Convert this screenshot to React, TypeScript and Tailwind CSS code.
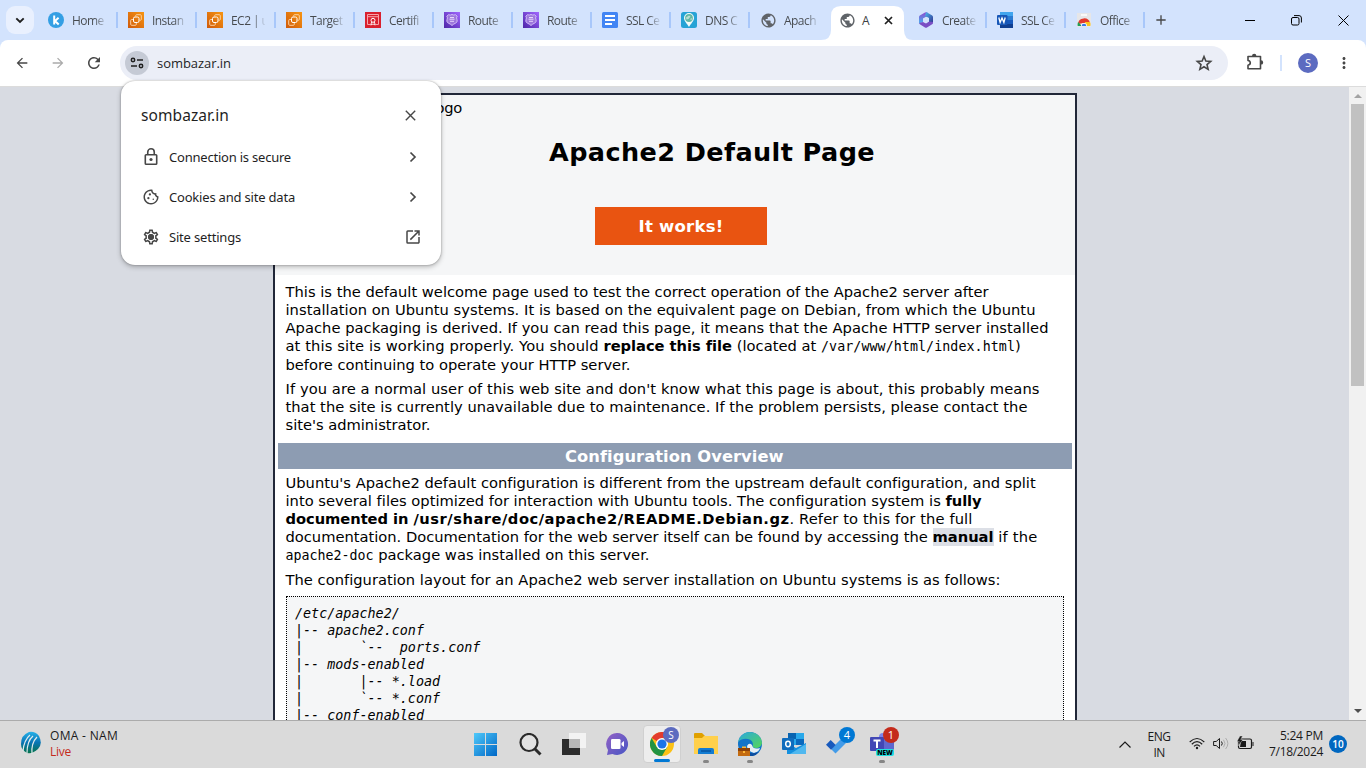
import { useLayoutEffect, useRef, useState, type ReactNode } from "react";
import {
  MdArrowBack, MdArrowForward, MdRefresh, MdMoreVert,
  MdOutlineCookie, MdOpenInNew, MdPublic, MdAdd, MdOutlineSettings,
} from "react-icons/md";

/** One line of text whose letter spacing is adjusted to span a given width. */
function Line({ w, className = "", children }: { w: number; className?: string; children: ReactNode }) {
  const ref = useRef<HTMLSpanElement>(null);
  const [spacing, setSpacing] = useState(0);
  useLayoutEffect(() => {
    const el = ref.current;
    if (!el) return;
    const n = (el.textContent ?? "").length;
    setSpacing((w - el.getBoundingClientRect().width) / n);
  }, [w]);
  return (
    <div className={`whitespace-pre ${className}`}>
      <span ref={ref} style={{ letterSpacing: spacing }}>{children}</span>
    </div>
  );
}

const Ec2 = () => (
  <svg width="16" height="16" viewBox="0 0 16 16">
    <defs><linearGradient id="ec" x1="0" y1="1" x2="1" y2="0"><stop stopColor="#cf5a0b" /><stop offset="1" stopColor="#f79512" /></linearGradient></defs>
    <rect width="16" height="16" fill="url(#ec)" />
    <rect x="5.5" y="5" width="5.500" height="5.500" rx="1.500" fill="none" stroke="#fff" />
    <path d="M5 7.500H3.700q-1 0-1 1v3.800q0 1 1 1h3.600q1 0 1-1V11M7.700 4.500v-.8q0-1 1-1h3.600q1 0 1 1v3.600q0 1-1 1h-.8" fill="none" stroke="#ffd9ae" strokeWidth=".9" />
  </svg>
);
const Cert = () => (
  <svg width="16" height="16" viewBox="0 0 16 16">
    <rect width="16" height="16" fill="#d9202f" />
    <path d="M5 12.500H2.500v-10h11v10H11M2.500 4.700h11" fill="none" stroke="#f7a3a9" />
    <circle cx="8" cy="8.300" r="2" fill="none" stroke="#fff" /><path d="M6.700 10l-1 3 2.300-1 2.300 1-1-3" fill="none" stroke="#fff" strokeWidth=".9" />
  </svg>
);
const Route = () => (
  <svg width="16" height="16" viewBox="0 0 16 16">
    <defs><linearGradient id="rt" x1="0" y1="1" x2="1" y2="0"><stop stopColor="#4d27a8" /><stop offset="1" stopColor="#a166ff" /></linearGradient></defs>
    <rect width="16" height="16" fill="url(#rt)" />
    <path d="M4.500 2.700q1.700.8 3.500-.2 1.800 1 3.500.2l1.700 1.500q-1.200 1.700-.2 3.300 1 2.500-1.500 3.700-2 .8-3.500 2.300-1.500-1.500-3.500-2.300-2.500-1.200-1.500-3.700 1-1.600-.2-3.300z" fill="#9d77dc" stroke="#d9c5fa" strokeWidth=".9" />
    <path d="M6 5.500h4M5.500 7.200h5M6 9.300h4" stroke="#eee2ff" strokeWidth=".9" />
  </svg>
);
const Docs = () => (
  <svg width="16" height="16" viewBox="0 0 16 16"><rect width="16" height="16" rx="1.500" fill="#4285f4" /><path d="M3 4h10M3 8h10M3 12h7" stroke="#fff" strokeWidth="2" /></svg>
);
const Dns = () => (
  <svg width="16" height="16" viewBox="0 0 16 16"><rect width="16" height="16" rx="2.500" fill="#26a3d6" /><path d="M8 15C6 11.500 3 9 3 6a5 5 0 0 1 10 0c0 3-3 5.500-5 9z" fill="#f4fbf8" /><circle cx="8" cy="6" r="3.900" fill="#62b7a5" /><path d="M5 5.500l3-2 1.500 1-2 2.500-2 .5zM9 7l2-1-.5 2.500z" fill="#b8dfd2" /></svg>
);
const K = () => (
  <svg className="-ml-px mr-px" width="16" height="16" viewBox="0 0 16 16"><circle cx="8" cy="8" r="8" fill="#349fe4" /><path d="M6.200 3.500v9M10.600 5.700L7 9l3.700 3.500" stroke="#fff" strokeWidth="2" fill="none" /></svg>
);
const Globe = () => <MdPublic className="-mr-px size-[17px] shrink-0 text-[#5f6368]" />;
const M365 = () => (
  <svg width="16" height="16" viewBox="0 0 16 16">
    <defs>
      <linearGradient id="m1" x1="0" y1="0" x2="0" y2="1"><stop stopColor="#8e4bd0" /><stop offset="1" stopColor="#46b5ef" /></linearGradient>
      <linearGradient id="m2" x1="0" y1="0" x2="1" y2="1"><stop stopColor="#4db8f0" /><stop offset="1" stopColor="#31348f" /></linearGradient>
    </defs>
    <path d="M7 .6L1.800 3.600Q1 4.200 1 5v6.500L5 10V6.500L10 4V1L9 .5Q8 .1 7 .6z" fill="url(#m1)" />
    <path d="M8 .3q1-.1 2 .7l4.200 2.500Q15 4 15 5v6l-4-1V6L7 4z" fill="url(#m2)" />
    <path d="M15 10v1q0 .8-.8 1.300L9 15.400q-1 .5-2 0L1.800 12.300 1 11l4-1 3 1.500L11 9.500z" fill="#7a4fc4" />
    <path d="M8 5l2.700 1.500v3L8 11 5.300 9.500v-3z" fill="#d3e3fd" />
  </svg>
);
const Word = () => (
  <svg width="16" height="16" viewBox="0 0 16 16"><path d="M3 0h13v4H3z" fill="#41a5ee" /><path d="M3 4h13v4H3z" fill="#2b7cd3" /><path d="M3 8h13v4H3z" fill="#185abd" /><path d="M3 12h13v4H3z" fill="#103f91" /><rect y="3" width="10.500" height="10" rx="1" fill="#1757b7" /><path d="M1.800 5.500l1.300 5L5 6l1.900 4.500 1.300-5" stroke="#fff" strokeWidth="1.300" fill="none" /></svg>
);
const Store = () => (
  <svg width="16" height="16" viewBox="0 0 16 16"><path d="M1 1h14v14H1z" fill="#e6e6e8" /><path d="M5 3h6" stroke="#fff" strokeWidth="1.500" /><path d="M2 12a6.100 6.100 0 0 1 12-1H8z" fill="#e33b2e" /><path d="M2 10l4 4H1.700q-.4-2 .3-4z" fill="#219e56" /><path d="M9 10h5q1 2 .3 4H8z" fill="#fcc31e" /><path d="M5 14a3 3 0 0 1 6 0z" fill="#fff" /><path d="M5.700 14a2.300 2.300 0 0 1 4.600 0z" fill="#3b78e7" /></svg>
);

const tabs: { icon: () => ReactNode; text: string; active?: boolean; bar?: boolean }[] = [
  { icon: K, text: "Home", bar: true },
  { icon: Ec2, text: "Instan", bar: true },
  { icon: Ec2, text: "EC2 | u", bar: true },
  { icon: Ec2, text: "Target", bar: true },
  { icon: Cert, text: "Certifi", bar: true },
  { icon: Route, text: "Route", bar: true },
  { icon: Route, text: "Route", bar: true },
  { icon: Docs, text: "SSL Ce", bar: true },
  { icon: Dns, text: "DNS C", bar: true },
  { icon: Globe, text: "Apach" },
  { icon: Globe, text: "A", active: true },
  { icon: M365, text: "Create", bar: true },
  { icon: Word, text: "SSL Ce", bar: true },
  { icon: Store, text: "Office", bar: true },
];

function TabStrip() {
  return (
    <div className="flex h-10 items-center bg-[#d3e3fd]">
      <div className="ml-1.5 flex size-7 items-center justify-center rounded-[9px] bg-[#e9f0fe] text-[#1f1f1f]">
        <svg width="10" height="7" viewBox="0 0 10 7"><path d="M1.300 1.300L5 5l3.700-3.700" stroke="currentColor" strokeWidth="1.900" fill="none" /></svg>
      </div>
      <div className="ml-[5px] flex h-10 items-center">
        {tabs.map((t, i) =>
          t.active ? (
            <div key={i} className="relative mt-1.5 flex h-[34px] w-[79px] items-center">
              <svg className="absolute -left-2 top-0" width="92" height="34" viewBox="0 0 92 34"><path d="M0 34q10 0 10-10V10Q10 0 20 0h53q10 0 10 10v14q0 10 9 10z" fill="#fff" /></svg>
              <div className="relative -mt-1.5 flex items-center pl-[10px]">
                <Globe />
                <span className="ml-[7px] mt-px w-[9px] font-['Open_Sans',sans-serif] text-[12px] text-[#3c4043]">{t.text}</span>
                <svg className="ml-[13px]" width="9" height="9" viewBox="0 0 9 9"><path d="M1 1l7 7M8 1L1 8" stroke="#1f1f1f" strokeWidth="1.700" /></svg>
              </div>
            </div>
          ) : (
            <div key={i} className="flex h-10 w-[79px] items-center pl-[10px]">
              {t.icon()}
              <span className={`mt-0.5 w-[34px] whitespace-pre bg-linear-to-r from-[#45494d] from-65% to-[#45494d]/10 bg-clip-text font-['Open_Sans',sans-serif] text-[12px] leading-4 tracking-[-0.55px] text-transparent ${i === 0 ? "ml-[7px] mr-px" : "ml-2"}`}>{t.text}</span>
              {t.bar && <span className="ml-auto h-4 w-0.5 bg-[#a8c7fa]" />}
            </div>
          )
        )}
      </div>
      <MdAdd className="ml-2 size-4 text-[#474747]" />
      <div className="ml-auto flex items-center gap-[36px] pr-[17px]">
        <svg width="10" height="10" viewBox="0 0 10 10"><path d="M0 5.500h10" stroke="#000" /></svg>
        <svg width="11" height="11" viewBox="0 0 11 11"><rect x=".5" y="2.500" width="7.500" height="7.500" rx="1.500" fill="none" stroke="#000" /><path d="M3 .6h5q2.400 0 2.400 2.400v4.500" stroke="#000" fill="none" /></svg>
        <svg width="11" height="11" viewBox="0 0 11 11"><path d="M.5.5l10 10M10.500.5l-10 10" stroke="#000" /></svg>
      </div>
    </div>
  );
}

function Toolbar() {
  return (
    <div className="bg-[#d3e3fd]">
      <div className="flex h-[47px] items-start rounded-t-lg border-b border-[#dcdcdc] bg-white text-[#474747]">
        <MdArrowBack className="ml-[14px] mt-[15px] size-4" />
        <MdArrowForward className="ml-5 mt-[15px] size-4 text-[#ababab]" />
        <MdRefresh className="ml-[19px] mt-[14px] size-[18px]" />
        <div className="ml-[17px] mt-1.5 flex h-[34px] w-[1108px] items-center rounded-full bg-[#ebeef7] pl-[5px] pr-[15px]">
          <div className="flex size-6 items-center justify-center rounded-full bg-[#c5cad5]">
            <svg width="14" height="12" viewBox="0 0 14 12" fill="none" stroke="#1f1f1f" strokeWidth="1.500"><circle cx="3" cy="3" r="1.700" /><path d="M7 3h6M1 9h6" /><circle cx="11" cy="9" r="1.700" /></svg>
          </div>
          <Line w={74} className="ml-2 mt-0.5 font-['Open_Sans',sans-serif] text-[13px] text-[#1f1f1f]">sombazar.in</Line>
          <svg className="ml-auto" width="18" height="18" viewBox="0 0 18 18"><path d="M9 2.500l1.850 4.550 4.850.4-3.700 3.150 1.150 4.800L9 12.800l-4.150 2.600L6 10.600 2.300 7.450l4.850-.4z" fill="none" stroke="#474747" strokeWidth="1.600" /></svg>
        </div>
        <svg className="ml-[18px] mt-[13px]" width="18" height="18" viewBox="0 0 18 18"><path d="M2 3.500h12.500v12.200H2v-3.500q2.300-.4 2.300-2.400T2 7.500z" fill="none" stroke="#474747" strokeWidth="1.600" strokeLinejoin="round" /><path d="M6 3a2.200 2.200 0 0 1 4.400 0zM15 7.200a2.200 2.200 0 0 1 0 4.400z" fill="#474747" /></svg>
        <span className="ml-4 mt-[15px] h-4 w-0.5 bg-[#d3e3fd]" />
        <span className="ml-4 mt-[13px] flex size-5 items-center justify-center rounded-full bg-[#5c6bc0] font-['Open_Sans',sans-serif] text-[11px] text-white">S</span>
        <MdMoreVert className="ml-[17px] mt-[14px] size-[18px]" />
      </div>
    </div>
  );
}

const Lock = () => (
  <svg width="18" height="20" viewBox="0 0 18 20" fill="none" stroke="#474747" strokeWidth="1.600"><rect x="3.300" y="7.800" width="11.400" height="9.400" rx=".8" /><path d="M5.750 7.500V5a3.250 3.250 0 0 1 6.500 0v2.500" /><circle cx="9" cy="12.500" r="1.600" fill="#474747" stroke="none" /></svg>
);
const Chevron = () => (
  <svg className="ml-auto mr-[24px]" width="8" height="12" viewBox="0 0 8 12"><path d="M1.500 1.500L6 6l-4.500 4.500" fill="none" stroke="#474747" strokeWidth="1.700" /></svg>
);

function SitePopup() {
  const row = "flex h-10 items-center pl-[21px] text-[#474747]";
  const label = "ml-[9px] mt-px font-['Noto_Sans',sans-serif] text-[13px] text-[#1f1f1f]";
  return (
    <div className="absolute left-[121px] top-[81px] h-[184px] w-[320px] rounded-[14px] bg-white pt-[13px] shadow-[0_0_2px_rgba(0,0,0,0.35),0_2px_5px_rgba(0,0,0,0.25)]">
      <div className="flex h-[43px] items-center pl-5 pr-[25px] text-[#474747]">
        <Line w={88} className="font-['Noto_Sans',sans-serif] text-[15.5px] text-[#1f1f1f]">sombazar.in</Line>
        <svg className="-mt-px ml-auto" width="11" height="11" viewBox="0 0 11 11"><path d="M.8.8l9.400 9.400M10.200.8L.8 10.200" stroke="#474747" strokeWidth="1.400" /></svg>
      </div>
      <div className={row}><Lock /><Line w={122} className={label}>Connection is secure</Line><Chevron /></div>
      <div className={row}><MdOutlineCookie className="size-[18px]" /><Line w={126} className={label}>Cookies and site data</Line><Chevron /></div>
      <div className={row}>
        <span className="relative flex size-[18px]"><MdOutlineSettings className="size-[18px]" /><span className="absolute left-1.5 top-1.5 size-1.5 rounded-full bg-[#474747]" /></span>
        <Line w={72} className={label}>Site settings</Line><MdOpenInNew className="ml-auto mr-[19px] size-[18px]" />
      </div>
    </div>
  );
}

const mono = "font-['DejaVu_Sans_Mono',monospace] text-[13.3px]";

function ApachePage() {
  return (
    <div className="flex h-[633px] overflow-hidden bg-[#d8dbe2] font-['DejaVu_Sans',sans-serif] text-[14.7px] text-black">
      <div className="ml-[273px] mt-1.5 h-[700px] w-[804px] shrink-0 border-2 border-[#212738] bg-white">
        <div className="flex h-[180px] flex-col bg-[#f5f6f7]">
          <Line w={148} className="pl-[39px] leading-[26px]">Ubuntu Apache Logo</Line>
          <Line w={326} className="pl-[274px] pt-3 text-[25.5px] font-bold leading-[38px]">Apache2 Default Page</Line>
          <div className="ml-[320px] mt-9 flex h-[38px] w-[172px] items-center justify-center bg-[#e95411] pt-[3px] text-[16.5px] font-bold text-white">
            <Line w={85}>It works!</Line>
          </div>
        </div>
        <div className="pl-[10.5px] pt-2 leading-[18px]">
          <Line w={703}>This is the default welcome page used to test the correct operation of the Apache2 server after</Line>
          <Line w={750}>installation on Ubuntu systems. It is based on the equivalent page on Debian, from which the Ubuntu</Line>
          <Line w={763}>Apache packaging is derived. If you can read this page, it means that the Apache HTTP server installed</Line>
          <div className="flex h-[18px] items-baseline">
            <Line w={318}>at this site is working properly. You should </Line>
            <Line w={128} className="font-bold">replace this file</Line>
            <Line w={89}> (located at </Line>
            <Line w={194} className={mono}>/var/www/html/index.html</Line>
            <Line w={6}>)</Line>
          </div>
          <Line w={345} className="mt-px">before continuing to operate your HTTP server.</Line>
          <Line w={754} className="mt-1.5">If you are a normal user of this web site and don't know what this page is about, this probably means</Line>
          <Line w={742}>that the site is currently unavailable due to maintenance. If the problem persists, please contact the</Line>
          <Line w={145}>site's administrator.</Line>
        </div>
        <div className="mx-[3px] mt-[9px] flex h-[26px] items-center bg-[#8d9cb2] pl-[287px] pt-[3px] text-[16.3px] font-bold text-white">
          <Line w={218}>Configuration Overview</Line>
        </div>
        <div className="pl-[10.5px] pt-[5px] leading-[18px]">
          <Line w={750}>Ubuntu's Apache2 default configuration is different from the upstream default configuration, and split</Line>
          <div className="flex h-[18px] items-baseline">
            <Line w={660}>into several files optimized for interaction with Ubuntu tools. The configuration system is </Line>
            <Line w={36} className="font-bold">fully</Line>
          </div>
          <div className="flex h-[18px] items-baseline">
            <Line w={128} className="font-bold">documented in </Line>
            <Line w={376} className="font-bold">/usr/share/doc/apache2/README.Debian.gz</Line>
            <Line w={183}>. Refer to this for the full</Line>
          </div>
          <div className="flex h-[18px] items-baseline">
            <Line w={647}>documentation. Documentation for the web server itself can be found by accessing the </Line>
            <Line w={61} className="bg-[#dcdfe6] font-bold">manual</Line>
            <Line w={44}> if the</Line>
          </div>
          <div className="flex h-[18px] items-baseline">
            <Line w={88} className={mono}>apache2-doc</Line>
            <Line w={276}> package was installed on this server.</Line>
          </div>
          <Line w={715} className="mt-[7px]">The configuration layout for an Apache2 web server installation on Ubuntu systems is as follows:</Line>
        </div>
        <pre className="ml-[11px] mt-[7px] h-[200px] w-[778px] border border-dotted border-black bg-[#f5f6f7] pl-2 pt-2 font-['DejaVu_Sans_Mono',monospace] text-[13.4px] italic leading-[17px]">{`/etc/apache2/
|-- apache2.conf
|       \`--  ports.conf
|-- mods-enabled
|       |-- *.load
|       \`-- *.conf
|-- conf-enabled`}</pre>
      </div>
      <div className="ml-auto flex h-full w-[17px] flex-col items-center bg-[#f1f1f1]">
        <svg className="mt-[7px]" width="8" height="4" viewBox="0 0 8 4"><path d="M0 4l4-4 4 4z" fill="#a3a3a3" /></svg>
        <div className="mt-1.5 h-[282px] w-[13px] bg-[#c1c1c1]" />
        <svg className="mb-[7px] mt-auto" width="8" height="4" viewBox="0 0 8 4"><path d="M0 0l4 4 4-4z" fill="#505050" /></svg>
      </div>
    </div>
  );
}

function Slot({ children, dot, active }: { children: ReactNode; dot?: boolean; active?: boolean }) {
  return (
    <div className="flex h-12 w-11 justify-center">
      <div className={`relative mt-1 flex h-[38px] w-[38px] flex-col items-center ${active ? "rounded border border-[#d0d0d0] bg-[#ededed] pt-[6px]" : "pt-2"}`}>
        {children}
        {dot && <span className="mt-auto h-[3px] w-1.5 shrink-0 rounded-full bg-[#868686]" />}
        {active && <span className="mt-auto h-[3px] w-4 shrink-0 rounded-full bg-[#0078d4]" />}
      </div>
    </div>
  );
}

function Taskbar() {
  const ui = "font-['Open_Sans',sans-serif]";
  return (
    <div className="flex h-12 border-t border-[#ababab] bg-[#dadada] text-[#1b1b1b]">
      <div className="flex w-[464px] pl-5">
        <svg className="mt-[10px]" width="22" height="24" viewBox="0 0 22 24">
          <defs><linearGradient id="ic" x1="0" y1="0" x2="0" y2="1"><stop stopColor="#27b1e8" /><stop offset=".5" stopColor="#0874b5" /><stop offset="1" stopColor="#07734c" /></linearGradient></defs>
          <path d="M1 13Q1 4 9 1q6-1 10 4 4 8-1 13-5 5-11 4Q1 19 1 13z" fill="url(#ic)" />
          <path d="M3 20Q4 9 10 4M7 22q0-12 6-17M12 23q-1-11 5-17" fill="none" stroke="#e1ebed" strokeWidth="1.200" />
        </svg>
        <div className={`ml-2 mt-[7px] text-[12px] leading-4 ${ui}`}>
          <Line w={68}>OMA - NAM</Line>
          <Line w={21} className="text-[#c42b1c]">Live</Line>
        </div>
      </div>
      <div className="flex">
        <Slot>
          <svg className="-ml-px" width="23" height="23" viewBox="0 0 23 23"><defs><linearGradient id="wn" x1="0" y1="0" x2="1" y2="1"><stop stopColor="#4fc9fa" /><stop offset="1" stopColor="#0067c6" /></linearGradient></defs><path d="M0 0h11v11H0zM12 0h11v11H12zM0 12h11v11H0zM12 12h11v11H12z" fill="url(#wn)" /></svg>
        </Slot>
        <Slot><svg width="23" height="23" viewBox="0 0 23 23" fill="none" stroke="#2a2a2a"><circle cx="10" cy="9.500" r="8.500" strokeWidth="2.200" fill="#e2e2e2" /><path d="M16 16l5.500 5.500" strokeWidth="3" /></svg></Slot>
        <Slot><svg width="24" height="23" viewBox="0 0 24 23"><path d="M0 6h18v16H0z" fill="#2c2c2c" /><path d="M7 0h17v15H7z" fill="#f3f3f3" /><path d="M7 6h11v9H7z" fill="#b8b8b8" /></svg></Slot>
        <Slot>
          <svg className="-ml-px" width="23" height="23" viewBox="0 0 23 23"><defs><linearGradient id="ch" x1="0" y1="0" x2="1" y2="1"><stop stopColor="#9361c5" /><stop offset="1" stopColor="#4756c4" /></linearGradient></defs><path d="M11.500 0a11 11 0 1 1-5 21L1 22l1-5A11 11 0 0 1 11.500 0z" fill="url(#ch)" /><rect x="5" y="6" width="9.500" height="10" rx="1.300" fill="#fff" /><path d="M15.500 10l2.500-2v6l-2.500-2z" fill="#fff" /></svg>
        </Slot>
        <Slot active>
          <svg width="24" height="24" viewBox="0 0 24 24"><circle cx="12" cy="12" r="12" fill="#fbc116" /><path d="M12 12L1.600 6A12 12 0 0 1 22.400 6H12z" fill="#e33b2e" /><path d="M1.600 6A12 12 0 0 0 12 24l5.200-9L12 12l-5.200 3z" fill="#229342" /><circle cx="12" cy="12" r="6" fill="#fff" /><circle cx="12" cy="12" r="4.600" fill="#1a73e8" /></svg>
          <span className={`absolute left-[19px] top-px flex size-4 items-center justify-center rounded-full bg-[#5c6bc0] text-[10px] text-white ${ui}`}>S</span>
        </Slot>
        <Slot dot>
          <svg width="24" height="22" viewBox="0 0 24 22"><path d="M0 1q0-1 1-1h7l3 3v4H0z" fill="#e0a000" /><path d="M0 5h8l2-2h14v18H0z" fill="#ffd04c" /><path d="M4 21v-4q0-2 2-2h12q2 0 2 2v4z" fill="#137cd2" /><path d="M7 18h10" stroke="#0755a0" strokeWidth="1.500" /></svg>
        </Slot>
        <Slot dot>
          <svg className="-mt-px" width="24" height="24" viewBox="0 0 24 24"><defs><linearGradient id="eg" x1="0" y1="0" x2="1" y2="1"><stop stopColor="#2aa9e0" /><stop offset="1" stopColor="#55d657" /></linearGradient></defs><circle cx="12" cy="12" r="12" fill="#1274c9" /><path d="M0 10C2 3 7 0 12 0q11 1 12 11-1 5-6 5-4 0-3-3 0-5-5-6Q4 6 0 10z" fill="url(#eg)" /><path d="M14 13q-3-3-5 1 0 5 7 7 5-1 6-5-7 2-8-3z" fill="#e6eef4" /><path d="M9 18q2 5 12 2-4 5-10 4z" fill="#0b4da0" /><path d="M0 16h12v8H0z" fill="#c46b10" /><path d="M0 16h12v3H0z" fill="#8b4209" /><path d="M4 16v-1.500h4V16M5 19h2v2H5z" fill="#ffb937" /></svg>
        </Slot>
        <Slot>
          <svg width="24" height="22" viewBox="0 0 24 22"><path d="M6 0h16v12H6z" fill="#28a8ea" /><path d="M6 0h8v6H6z" fill="#0864b1" /><path d="M14 6h8v6h-8z" fill="#0b69bd" /><path d="M5 10l9 5 10-5v11H5z" fill="#1490df" /><path d="M24 11v10H8z" fill="#50b8ef" /><rect y="5" width="12" height="12" rx="1" fill="#0f6cbd" /><ellipse cx="6" cy="11" rx="2.300" ry="2.700" fill="none" stroke="#fff" strokeWidth="1.500" /></svg>
        </Slot>
        <Slot>
          <svg className="-ml-1" width="20" height="22" viewBox="0 0 20 22"><path d="M9.500 20.500L5 16 15.500 5.500 20 10z" fill="#439be8" /><path d="M4.700 7L0 11.700 5 16.700l4.700-4.700z" fill="#185abd" /></svg>
          <span className={`absolute left-[20px] top-0.5 flex size-4 items-center justify-center rounded-full bg-[#0078d4] text-[11px] text-white ${ui}`}>4</span>
        </Slot>
        <Slot dot>
          <svg width="24" height="23" viewBox="0 0 24 23"><circle cx="13" cy="4" r="4" fill="#7b83eb" /><path d="M8 6h16v10q-4 6-10 5-6-2-6-7z" fill="#6068cf" /><rect y="4" width="14" height="14" rx="1" fill="#4247b5" /><path d="M3.500 7.500h7M7 7.500V15" stroke="#fff" strokeWidth="2" /></svg>
          <span className="absolute left-[13px] top-6 flex h-[7px] w-[18px] items-center justify-center rounded-[2px] bg-[#20dfe0] font-['Open_Sans',sans-serif] text-[6.5px] font-extrabold text-black">NEW</span>
          <span className={`absolute left-[20px] top-0.5 flex size-4 items-center justify-center rounded-full bg-[#c42b1c] text-[11px] text-white ${ui}`}>1</span>
        </Slot>
      </div>
      <div className={`ml-auto flex text-[12px] leading-4 ${ui}`}>
        <svg className="mt-5" width="12" height="7" viewBox="0 0 12 7"><path d="M.5 6.500L6 1l5.500 5.500" fill="none" stroke="#1b1b1b" strokeWidth="1.200" /></svg>
        <div className="ml-4 mt-2 flex w-6 flex-col items-center"><Line w={23}>ENG</Line><Line w={11}>IN</Line></div>
        <svg className="ml-[18px] mt-4" width="16" height="13" viewBox="0 0 16 13" fill="none" stroke="#1b1b1b"><path d="M.7 5q7.300-7 14.600 0" strokeWidth="1.100" /><path d="M2.800 7.200q5.200-5 10.400 0M5 9.400q3-3 6 0" strokeWidth="1.200" /><circle cx="8" cy="11" r="1.200" fill="#1b1b1b" stroke="none" /></svg>
        <svg className="ml-2 mt-4" width="16" height="13" viewBox="0 0 16 13" fill="none" stroke="#1b1b1b"><path d="M.6 4.500h2.600L6.500 1.500v10L3.200 8.500H.6z" /><path d="M8.500 4.500q1.500 2 0 4" /><path d="M10.500 2.800q3 3.700 0 7.400M12.600 1q4.500 5.500 0 11" stroke="#adadad" /></svg>
        <svg className="ml-2 mt-[15px]" width="17" height="14" viewBox="0 0 17 14"><rect x="1.500" y="3" width="13" height="9.500" rx="1.500" fill="none" stroke="#1b1b1b" strokeWidth="1.200" /><path d="M4 5h5v6H3zM15.500 6h1v4h-1z" fill="#1b1b1b" /><path d="M3 0L0 5.500h2.200L1 10l5-6.500H3.700L5.500 0z" fill="#1b1b1b" stroke="#dadada" strokeWidth=".4" /></svg>
        <div className="ml-[15px] mt-[7px] flex w-[54px] flex-col items-end"><Line w={43}>5:24 PM</Line><Line w={54}>7/18/2024</Line></div>
        <span className="ml-[6px] mr-[19px] mt-[14px] flex size-[18px] items-center justify-center rounded-full bg-[#0067c0] text-[10px] font-semibold text-white">10</span>
      </div>
    </div>
  );
}

export default function App() {
  return (
    <div className="relative h-[768px] w-[1366px] overflow-hidden">
      <TabStrip />
      <Toolbar />
      <ApachePage />
      <Taskbar />
      <SitePopup />
    </div>
  );
}
